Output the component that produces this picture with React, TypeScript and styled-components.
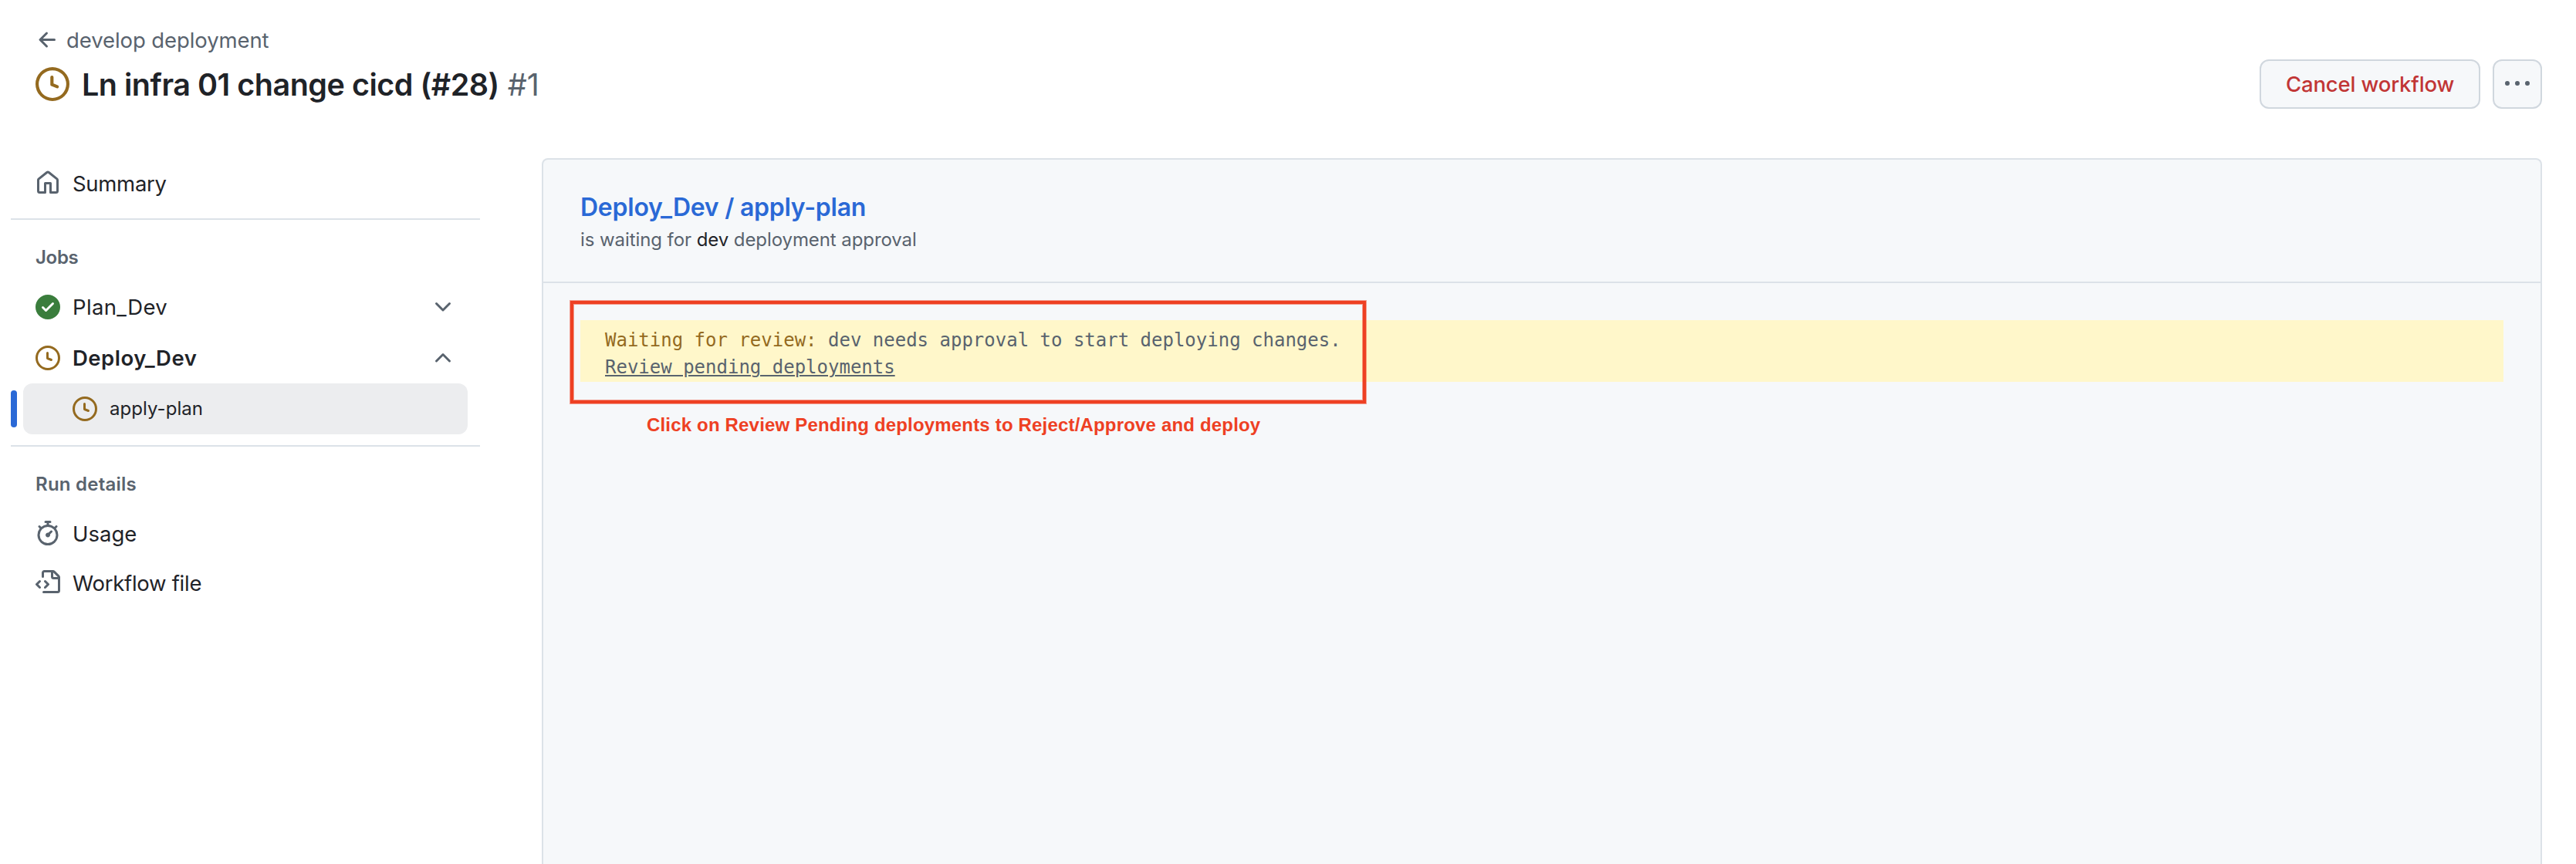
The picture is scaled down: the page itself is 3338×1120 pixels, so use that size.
import React from "react";
import styled, { createGlobalStyle } from "styled-components";

const c = {
  fg: "#1f2328",
  muted: "#59636e",
  border: "#dce2e8",
  buttonBorder: "#d0d7de",
  subtle: "#f6f8fa",
  attention: "#946a1f",
  success: "#3a7d3c",
  accent: "#2a69d6",
  danger: "#c13535",
  note: "#ee4023",
};

const GlobalStyle = createGlobalStyle`
  *, *::before, *::after { box-sizing: border-box; }
  body {
    margin: 0;
    background: #ffffff;
    color: ${c.fg};
    font-family: Inter, "Liberation Sans", sans-serif;
  }
`;

const icons = {
  arrowLeft:
    "M7.78 12.53a.75.75 0 0 1-1.06 0L2.47 8.28a.75.75 0 0 1 0-1.06l4.25-4.25a.751.751 0 0 1 1.042.018.751.751 0 0 1 .018 1.042L4.81 7h7.44a.75.75 0 0 1 0 1.5H4.81l2.97 2.97a.75.75 0 0 1 0 1.06Z",
  clock:
    "M8 0a8 8 0 1 1 0 16A8 8 0 0 1 8 0ZM1.5 8a6.5 6.5 0 1 0 13 0 6.5 6.5 0 0 0-13 0Zm7-3.25v2.992l2.028.812a.75.75 0 0 1-.557 1.392l-2.5-1A.751.751 0 0 1 7 8.25v-3.5a.75.75 0 0 1 1.5 0Z",
  home:
    "M6.906.664a1.749 1.749 0 0 1 2.187 0l5.25 4.2c.415.332.657.835.657 1.367v7.019A1.75 1.75 0 0 1 13.25 15h-3.5a.75.75 0 0 1-.75-.75V9H7v5.25a.75.75 0 0 1-.75.75h-3.5A1.75 1.75 0 0 1 1 13.25V6.23c0-.531.242-1.034.657-1.366l5.25-4.2Zm1.25 1.171a.25.25 0 0 0-.312 0l-5.25 4.2a.25.25 0 0 0-.094.196v7.019c0 .138.112.25.25.25H5.5V8.25a.75.75 0 0 1 .75-.75h3.5a.75.75 0 0 1 .75.75v5.25h2.75a.25.25 0 0 0 .25-.25V6.23a.25.25 0 0 0-.094-.195Z",
  check:
    "M8 16A8 8 0 1 1 8 0a8 8 0 0 1 0 16Zm3.78-9.72a.751.751 0 0 0-.018-1.042.751.751 0 0 0-1.042-.018L6.75 9.19 5.28 7.72a.751.751 0 0 0-1.042.018.751.751 0 0 0-.018 1.042l2 2a.75.75 0 0 0 1.06 0Z",
  chevronDown:
    "M12.78 5.22a.749.749 0 0 1 0 1.06l-4.25 4.25a.749.749 0 0 1-1.06 0L3.22 6.28a.749.749 0 1 1 1.06-1.06L8 8.939l3.72-3.719a.749.749 0 0 1 1.06 0Z",
  chevronUp:
    "M3.22 10.53a.749.749 0 0 1 0-1.06l4.25-4.25a.749.749 0 0 1 1.06 0l4.25 4.25a.749.749 0 1 1-1.06 1.06L8 6.811 4.28 10.53a.749.749 0 0 1-1.06 0Z",
  stopwatch:
    "M5.75.75A.75.75 0 0 1 6.5 0h3a.75.75 0 0 1 0 1.5h-.75v1l-.001.041a6.724 6.724 0 0 1 3.464 1.435l.007-.006.75-.75a.749.749 0 0 1 1.275.326.749.749 0 0 1-.215.734l-.75.75-.006.007a6.75 6.75 0 1 1-10.548 0L2.72 5.03l-.75-.75a.751.751 0 0 1 .018-1.042.751.751 0 0 1 1.042-.018l.75.75.007.006A6.72 6.72 0 0 1 7.25 2.541V1.5H6.5a.75.75 0 0 1-.75-.75ZM8 14.5a5.25 5.25 0 1 0-.001-10.501A5.25 5.25 0 0 0 8 14.5Zm.389-6.7 1.33-1.33a.75.75 0 1 1 1.061 1.06L9.45 8.861A1.503 1.503 0 0 1 8 10.75a1.499 1.499 0 1 1 .389-2.95Z",
  fileCode:
    "M4 1.75C4 .784 4.784 0 5.75 0h5.586c.464 0 .909.184 1.237.513l2.914 2.914c.329.328.513.773.513 1.237v8.586A1.75 1.75 0 0 1 14.25 15h-9a.75.75 0 0 1 0-1.5h9a.25.25 0 0 0 .25-.25V6h-2.75A1.75 1.75 0 0 1 10 4.25V1.5H5.75a.25.25 0 0 0-.25.25v2.5a.75.75 0 0 1-1.5 0Zm1.72 4.97a.75.75 0 0 1 1.06 0l2 2a.75.75 0 0 1 0 1.06l-2 2a.749.749 0 0 1-1.275-.326.749.749 0 0 1 .215-.734l1.47-1.47-1.47-1.47a.75.75 0 0 1 0-1.06ZM3.28 7.78 1.81 9.25l1.47 1.47a.751.751 0 0 1-.018 1.042.751.751 0 0 1-1.042.018l-2-2a.75.75 0 0 1 0-1.06l2-2a.751.751 0 0 1 1.042.018.751.751 0 0 1 .018 1.042Zm8.22-6.218V4.25c0 .138.112.25.25.25h2.688l-.011-.013-2.914-2.914-.013-.011Z",
  kebab:
    "M8 9a1.5 1.5 0 1 0 0-3 1.5 1.5 0 0 0 0 3ZM1.5 9a1.5 1.5 0 1 0 0-3 1.5 1.5 0 0 0 0 3Zm13 0a1.5 1.5 0 1 0 0-3 1.5 1.5 0 0 0 0 3Z",
};

const Svg = styled.svg<{ $color: string }>`
  display: block;
  flex: none;
  fill: ${(p) => p.$color};
`;

function Icon({ name, size = 32, color = c.muted }: { name: keyof typeof icons; size?: number; color?: string }) {
  return (
    <Svg viewBox="0 0 16 16" width={size} height={size} $color={color} aria-hidden="true">
      <path d={icons[name]} />
    </Svg>
  );
}

const Page = styled.div`
  display: flex;
  flex-direction: column;
  height: 1120px;
  overflow: hidden;
`;

const Header = styled.header`
  display: flex;
  flex-direction: column;
  gap: 9px;
  padding: 36px 44px 0 46px;
`;

const Breadcrumb = styled.a`
  display: flex;
  align-items: center;
  gap: 8px;
  height: 32px;
  font-size: 27.5px;
  line-height: 32px;
  letter-spacing: -0.09px;
  color: ${c.muted};
`;

const TitleRow = styled.div`
  display: flex;
  align-items: center;
  height: 64px;
`;

const Title = styled.h1`
  flex: 1;
  margin: 0 0 0 16px;
  padding-top: 2px;
  font-size: 39.5px;
  font-weight: 600;
  line-height: 62px;
  letter-spacing: -0.48px;
`;

const RunNumber = styled.span`
  margin-left: 11px;
  font-weight: 400;
  letter-spacing: 0;
  color: ${c.muted};
`;

const Actions = styled.div`
  display: flex;
  gap: 16px;
`;

const Button = styled.button<{ $width: number }>`
  display: flex;
  align-items: center;
  justify-content: center;
  width: ${(p) => p.$width}px;
  height: 64px;
  padding: 0;
  border: 2px solid ${c.buttonBorder};
  border-radius: 12px;
  background: ${c.subtle};
  color: ${c.danger};
  font: 500 27.5px/60px Inter, "Liberation Sans", sans-serif;
  letter-spacing: -0.14px;
`;

const ButtonLabel = styled.span`
  padding-top: 1px;
  line-height: 59px;
`;

const Body = styled.div`
  display: flex;
  flex: 1;
  gap: 80px;
  min-height: 0;
  padding: 64px 44px 0 14px;
`;

const Sidebar = styled.nav`
  display: flex;
  flex-direction: column;
  flex: none;
  width: 608px;
`;

const Divider = styled.hr`
  width: 100%;
  height: 2px;
  margin: 14px 0 16px;
  border: 0;
  background: ${c.border};
`;

const GroupTitle = styled.h2<{ $spacing: number }>`
  margin: 0;
  padding: 1px 0 0 32px;
  font-size: 24px;
  font-weight: 600;
  line-height: 63px;
  letter-spacing: ${(p) => p.$spacing}px;
  color: ${c.muted};
`;

const NavItem = styled.a<{ $height?: number; $bold?: boolean; $spacing: number }>`
  display: flex;
  align-items: center;
  gap: 16px;
  height: ${(p) => p.$height ?? 64}px;
  padding: 0 32px;
  font-size: 27.5px;
  font-weight: ${(p) => (p.$bold ? 600 : 400)};
  letter-spacing: ${(p) => p.$spacing}px;
`;

const NavLabel = styled.span<{ $drop?: number }>`
  flex: 1;
  padding-top: ${(p) => p.$drop ?? 0}px;
`;

const ActiveRow = styled.div`
  display: flex;
  align-items: center;
  gap: 8px;
  height: 66px;
`;

const ActiveBar = styled.span`
  width: 8px;
  height: 48px;
  border-radius: 4px;
  background: ${c.accent};
`;

const ActiveItem = styled.a`
  display: flex;
  align-items: center;
  gap: 16px;
  width: 576px;
  height: 66px;
  padding-left: 64px;
  border-radius: 12px;
  background: #ecedef;
  font-size: 24px;
  line-height: 64px;
  letter-spacing: 0.05px;
`;

const Panel = styled.main`
  display: flex;
  flex-direction: column;
  flex: 1;
  border: 2px solid ${c.border};
  border-bottom: 0;
  border-radius: 8px 8px 0 0;
  background: ${c.subtle};
`;

const PanelHeader = styled.div`
  height: 160px;
  padding: 38px 48px 0;
  border-bottom: 2px solid ${c.border};
`;

const JobName = styled.h2`
  margin: 0;
  font-size: 32px;
  font-weight: 600;
  line-height: 48px;
  letter-spacing: -0.25px;
  color: ${c.accent};
`;

const JobStatus = styled.p`
  margin: 0;
  font-size: 24px;
  line-height: 36px;
  letter-spacing: -0.08px;
  color: ${c.muted};
`;

const Environment = styled.span`
  color: ${c.fg};
`;

const PanelContent = styled.div`
  position: relative;
  flex: 1;
  padding: 48px;
`;

const Notice = styled.div`
  height: 80px;
  padding: 9px 32px 1px;
  background: #fff7ca;
  color: ${c.muted};
  font: 24px/35px "DejaVu Sans Mono", "Liberation Mono", monospace;
`;

const NoticeLabel = styled.span`
  color: ${c.attention};
`;

const ReviewLink = styled.a`
  display: block;
  text-decoration: underline;
  text-decoration-thickness: 1.5px;
  text-underline-offset: 2px;
`;

const Highlight = styled.div`
  position: absolute;
  top: 23px;
  left: 35px;
  width: 1031px;
  height: 133px;
  border: 4px solid ${c.note};
  box-shadow: 0 0 0 1px #ee402380, inset 0 0 0 1px #ee402380;
`;

const Caption = styled.p`
  margin: 38px 0 0 86px;
  color: ${c.note};
  font: 700 24px/36px "Liberation Sans", Arial, sans-serif;
  letter-spacing: 0.175px;
`;

export default function App() {
  return (
    <Page>
      <GlobalStyle />
      <Header>
        <Breadcrumb>
          <Icon name="arrowLeft" />
          develop deployment
        </Breadcrumb>
        <TitleRow>
          <Icon name="clock" size={44} color={c.attention} />
          <Title>
            Ln infra 01 change cicd (#28)
            <RunNumber>#1</RunNumber>
          </Title>
          <Actions>
            <Button $width={286}>
              <ButtonLabel>Cancel workflow</ButtonLabel>
            </Button>
            <Button $width={64} aria-label="More options">
              <Icon name="kebab" />
            </Button>
          </Actions>
        </TitleRow>
      </Header>
      <Body>
        <Sidebar>
          <NavItem $spacing={-0.3}>
            <Icon name="home" />
            <NavLabel $drop={2}>Summary</NavLabel>
          </NavItem>
          <Divider />
          <GroupTitle $spacing={-0.3}>Jobs</GroupTitle>
          <NavItem $height={66} $spacing={0.36}>
            <Icon name="check" color={c.success} />
            <NavLabel>Plan_Dev</NavLabel>
            <Icon name="chevronDown" />
          </NavItem>
          <NavItem $height={66} $spacing={0.5} $bold>
            <Icon name="clock" color={c.attention} />
            <NavLabel>Deploy_Dev</NavLabel>
            <Icon name="chevronUp" />
          </NavItem>
          <ActiveRow>
            <ActiveBar />
            <ActiveItem>
              <Icon name="clock" color={c.attention} />
              apply-plan
            </ActiveItem>
          </ActiveRow>
          <Divider />
          <GroupTitle $spacing={0.23}>Run details</GroupTitle>
          <NavItem $spacing={0}>
            <Icon name="stopwatch" />
            <NavLabel $drop={2}>Usage</NavLabel>
          </NavItem>
          <NavItem $spacing={-0.27}>
            <Icon name="fileCode" />
            <NavLabel $drop={2}>Workflow file</NavLabel>
          </NavItem>
        </Sidebar>
        <Panel>
          <PanelHeader>
            <JobName>Deploy_Dev / apply-plan</JobName>
            <JobStatus>
              is waiting for <Environment>dev</Environment> deployment approval
            </JobStatus>
          </PanelHeader>
          <PanelContent>
            <Notice>
              <NoticeLabel>Waiting for review:</NoticeLabel> dev needs approval to start deploying changes.
              <ReviewLink>Review pending deployments</ReviewLink>
            </Notice>
            <Highlight />
            <Caption>Click on Review Pending deployments to Reject/Approve and deploy</Caption>
          </PanelContent>
        </Panel>
      </Body>
    </Page>
  );
}
